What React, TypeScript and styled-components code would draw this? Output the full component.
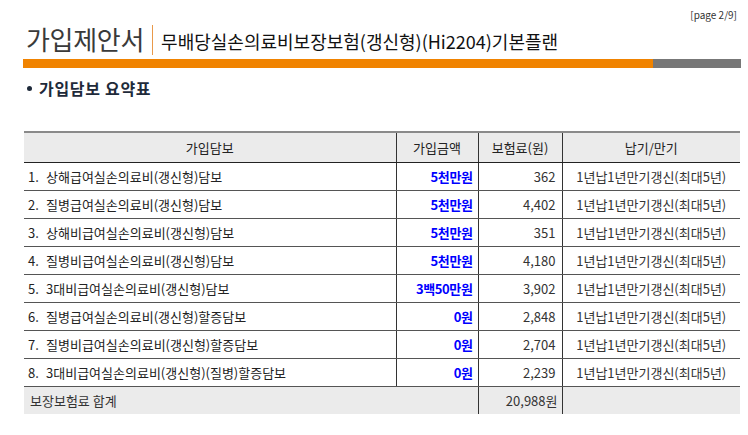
import React from "react";
import styled, { createGlobalStyle } from "styled-components";

const Global = createGlobalStyle`
  html, body { margin: 0; padding: 0; background: #fff; }
  body { font-family: "Noto Sans CJK KR", "Noto Sans", sans-serif; color: #222; }
`;

const Page = styled.div`
  width: 748px;
  height: 435px;
  display: flex;
  flex-direction: column;
  overflow: hidden;
`;

const PageNum = styled.div`
  height: 12px;
  margin-top: 9px;
  padding-right: 11px;
  text-align: right;
  font-size: 10px;
  line-height: 12px;
  color: #333;
`;

const TitleRow = styled.div`
  display: flex;
  align-items: center;
  height: 36px;
  margin-left: 26px;
`;

const Title = styled.div`
  font-size: 26px;
  line-height: 30px;
  color: #3a3a3a;
  letter-spacing: -0.3px;
`;

const Divider = styled.div`
  width: 1px;
  height: 30px;
  background: #e9994a;
  margin: 2px 8px 0 8px;
`;

const Subtitle = styled.div`
  font-size: 18px;
  line-height: 22px;
  color: #111;
  margin-top: 3px;
`;

const Bar = styled.div`
  display: flex;
  height: 9px;
  margin: 2px 7px 0 23px;
`;

const BarSeg = styled.div<{ $color: string; $w?: number }>`
  background: ${(p) => p.$color};
  ${(p) => (p.$w ? `width: ${p.$w}px;` : "flex: 1;")}
`;

const Section = styled.div`
  margin-top: 10px;
  padding-left: 27px;
  font-size: 16px;
  font-weight: 700;
  line-height: 20px;
  letter-spacing: 0.7px;
  color: #1e2a3a;
  display: flex;
  align-items: center;
  gap: 7px;
`;

const Bullet = styled.span`
  width: 5px;
  height: 5px;
  border-radius: 50%;
  background: #1e2a3a;
`;

const Table = styled.table`
  margin: 33px 0 0 24px;
  width: 716px;
  border-collapse: collapse;
  table-layout: fixed;
  font-size: 13px;
  color: #222;
`;

const HeadCell = styled.th`
  height: 29px;
  padding: 0;
  background: #ebebeb;
  font-weight: 400;
  text-align: center;
  border-top: 2px solid #8a8a8a;
  border-bottom: 1px solid #222;
  border-left: 1px solid #333;
  &:first-child { border-left: none; }
`;

const Cell = styled.td<{ $align?: string }>`
  height: 27px;
  padding: 0 5px;
  text-align: ${(p) => p.$align || "left"};
  border-bottom: 1px solid #555;
  border-left: 1px solid #333;
  white-space: nowrap;
  &:first-child { border-left: none; padding-left: 4px; }
`;

const Index = styled.span`
  display: inline-block;
  width: 18px;
`;

const Amount = styled(Cell)`
  color: #0000ff;
  font-weight: 700;
  letter-spacing: -0.4px;
`;

const Num = styled(Cell)`
  color: #333;
  padding-right: 6px;
`;

const Term = styled(Cell)`
  color: #333;
  text-align: center;
`;

const TotalCell = styled.td<{ $align?: string }>`
  height: 27px;
  padding: 0 4px 0 6px;
  background: #ebebeb;
  text-align: ${(p) => p.$align || "left"};
  border-left: 1px solid #333;
  color: #333;
  &:first-child { border-left: none; }
`;

const rows = [
  ["상해급여실손의료비(갱신형)담보", "5천만원", "362"],
  ["질병급여실손의료비(갱신형)담보", "5천만원", "4,402"],
  ["상해비급여실손의료비(갱신형)담보", "5천만원", "351"],
  ["질병비급여실손의료비(갱신형)담보", "5천만원", "4,180"],
  ["3대비급여실손의료비(갱신형)담보", "3백50만원", "3,902"],
  ["질병급여실손의료비(갱신형)할증담보", "0원", "2,848"],
  ["질병비급여실손의료비(갱신형)할증담보", "0원", "2,704"],
  ["3대비급여실손의료비(갱신형)(질병)할증담보", "0원", "2,239"],
];

export default function App() {
  return (
    <Page>
      <Global />
      <PageNum>[page 2/9]</PageNum>
      <TitleRow>
        <Title>가입제안서</Title>
        <Divider />
        <Subtitle>무배당실손의료비보장보험(갱신형)(Hi2204)기본플랜</Subtitle>
      </TitleRow>
      <Bar>
        <BarSeg $color="#f08300" />
        <BarSeg $color="#777777" $w={88} />
      </Bar>
      <Section>
        <Bullet />
        가입담보 요약표
      </Section>
      <Table>
        <colgroup>
          <col style={{ width: 372 }} />
          <col style={{ width: 82 }} />
          <col style={{ width: 84 }} />
          <col style={{ width: 178 }} />
        </colgroup>
        <thead>
          <tr>
            <HeadCell>가입담보</HeadCell>
            <HeadCell>가입금액</HeadCell>
            <HeadCell>보험료(원)</HeadCell>
            <HeadCell>납기/만기</HeadCell>
          </tr>
        </thead>
        <tbody>
          {rows.map(([name, amt, prem], i) => (
            <tr key={i}>
              <Cell>
                <Index>{i + 1}.</Index>
                {name}
              </Cell>
              <Amount $align="right">{amt}</Amount>
              <Num $align="right">{prem}</Num>
              <Term>1년납1년만기갱신(최대5년)</Term>
            </tr>
          ))}
          <tr>
            <TotalCell colSpan={2}>보장보험료 합계</TotalCell>
            <TotalCell $align="right">20,988원</TotalCell>
            <TotalCell />
          </tr>
        </tbody>
      </Table>
    </Page>
  );
}
